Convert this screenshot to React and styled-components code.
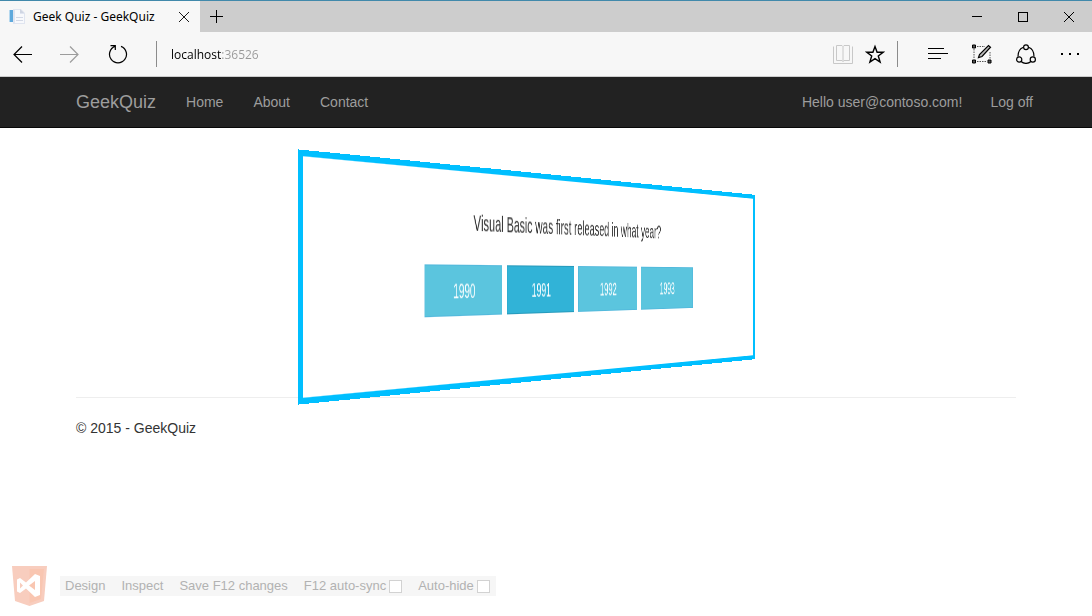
import React from "react";
import styled, { createGlobalStyle } from "styled-components";

const GlobalStyle = createGlobalStyle`
  *, *::before, *::after { box-sizing: border-box; }
  body {
    margin: 0;
    background: #fff;
    color: #333;
    font: 14px/20px "Liberation Sans", Arial, sans-serif;
  }
  button { border: 0; padding: 0; background: none; font: inherit; color: inherit; }
  a { color: inherit; text-decoration: none; }
`;

const TitleBar = styled.div`
  display: flex;
  justify-content: space-between;
  height: 32px;
  background: #cdcdcd;
  border-top: 1px solid #4189ab;
`;

const TabStrip = styled.div`
  display: flex;
`;

const Tab = styled.div`
  display: flex;
  align-items: center;
  width: 200px;
  padding: 0 8px;
  background: #f7f7f7;
  color: #000;
  font-family: "Noto Sans", "Segoe UI", sans-serif;
  font-size: 12px;
`;

const TabTitle = styled.span`
  flex: 1;
  margin-left: 8px;
  white-space: nowrap;
`;

const IconButton = styled.button`
  display: flex;
  align-items: center;
  justify-content: center;
  flex: none;
  width: ${(p) => p.$width || 44}px;
  color: ${(p) => p.$color || "#000"};
`;

const Toolbar = styled.div`
  display: flex;
  align-items: stretch;
  height: 45px;
  background: #f7f7f7;
  border-bottom: 1px solid #ccc;
`;

const HistoryButtons = styled.div`
  display: flex;
  gap: 4px;
`;

const Divider = styled.span`
  align-self: center;
  flex: none;
  width: 1px;
  height: 26px;
  margin: 0 ${(p) => p.$after}px 0 ${(p) => p.$before}px;
  background: #8c8c8c;
`;

const Address = styled.input`
  flex: 1;
  min-width: 0;
  padding: 0;
  border: 0;
  outline: 0;
  font-family: "Open Sans", "Segoe UI", sans-serif;
  font-size: 12px;
  color: transparent;
  background: linear-gradient(90deg, #000 50px, #999 50px);
  background-clip: text;
`;

const NavBar = styled.nav`
  background: #222;
  border-bottom: 1px solid #080808;
  color: #9d9d9d;
`;

const NavInner = styled.div`
  display: flex;
  align-items: center;
  justify-content: space-between;
  max-width: 1000px;
  height: 50px;
  margin: 0 auto;
  padding: 0 13px 0 30px;
`;

const NavGroup = styled.div`
  display: flex;
  align-items: center;
  gap: ${(p) => p.$gap}px;
`;

const Brand = styled.a`
  font-size: 18px;
`;

const Container = styled.main`
  max-width: 970px;
  margin: 0 auto;
  padding: 49px 15px 0;
`;

const QuizCard = styled.section`
  position: relative;
  z-index: 1;
  height: 200px;
  margin: 0 -15px;
  padding-top: 31px;
  border: solid #00bfff;
  border-width: 5px 7px;
  background: #fff;
  text-align: center;
  transform: translateX(30px) perspective(2000px) rotateY(63.3deg);
`;

const Question = styled.p`
  margin: 0 0 24px;
  font-size: 21px;
  line-height: 29px;
`;

const Options = styled.div`
  display: flex;
  justify-content: center;
  gap: 9px;
`;

const Option = styled.button`
  && {
    width: 140px;
    height: 46px;
    padding-top: 2px;
    border: 1px solid ${(p) => (p.$active ? "#269abc" : "#52b9dc")};
    background: ${(p) => (p.$active ? "#31b3d7" : "#5bc5de")};
    color: #fff;
    font-size: 18px;
  }
`;

const Footer = styled.footer`
  margin-top: 20px;
  padding-top: 20px;
  border-top: 1px solid #eee;
`;

const LinkBar = styled.aside`
  position: fixed;
  left: 12px;
  bottom: 10px;
  display: flex;
  align-items: center;
  gap: 13px;
`;

const LinkItems = styled.div`
  display: flex;
  align-items: center;
  gap: 16px;
  height: 20px;
  padding: 0 6px 0 5px;
  background: #f6f6f6;
  color: #b2b2b2;
  font-size: 13px;
`;

const CheckLabel = styled.label`
  display: flex;
  align-items: center;
  gap: 3px;
`;

const Check = styled.input`
  appearance: none;
  width: 13px;
  height: 13px;
  margin: 0;
  border: 1px solid #d2d2d2;
  background: #fff;
`;

const Icon = ({ size = 20, width, height, children, ...rest }) => (
  <svg
    width={width || size}
    height={height || size}
    viewBox={`0 0 ${width || size} ${height || size}`}
    fill="none"
    stroke="currentColor"
    strokeWidth="1.2"
    aria-hidden="true"
    {...rest}
  >
    {children}
  </svg>
);

const PageIcon = () => (
  <Icon size={17} stroke="none">
    <path d="M5 1h8l4 4v11H5z" fill="#e0e5f0" />
    <path d="M7 2h5v4h4v9H7z" fill="#f8f9fc" />
    <path d="M12 1v4h4z" fill="#cfd5e2" />
    <path d="M8 9h7v1H8zM8 12h7v1H8z" fill="#d3d9e6" />
    <path d="M1 2h1v12H1z" fill="#b5d8ef" />
    <path d="M2 2h3v12H2z" fill="#5fa9dc" />
  </Icon>
);

const Logo = () => (
  <Icon width={35} height={40} stroke="none">
    <path d="M0 0h35l-3 35-14.500 5L3 35z" fill="#f8cdbe" />
    <path d="M17.500 3H32l-3 30-11.500 4z" fill="#f9c6b1" />
    <path
      fillRule="evenodd"
      d="M5 13.500l3-1.500 6 4.500 9-8.500 5 2v19l-5 2-9-8.500L8 27l-3-1.500zm3 3v6l3-3zm15-1.500l-6 4.500 6 4.500z"
      fill="#fff"
    />
  </Icon>
);

const years = ["1990", "1991", "1992", "1993"];

export default function App() {
  return (
    <>
      <GlobalStyle />
      <TitleBar>
        <TabStrip>
          <Tab>
            <PageIcon />
            <TabTitle>Geek Quiz - GeekQuiz</TabTitle>
            <IconButton $width={16} aria-label="Close tab">
              <Icon size={12} strokeWidth="0.900"><path d="M1 1l10 10M11 1L1 11" /></Icon>
            </IconButton>
          </Tab>
          <IconButton $width={33} aria-label="New tab">
            <Icon size={13} strokeWidth="1"><path d="M0 6.500h13M6.500 0v13" /></Icon>
          </IconButton>
        </TabStrip>
        <TabStrip>
          <IconButton $width={46} aria-label="Minimize">
            <Icon size={10} strokeWidth="1" shapeRendering="crispEdges"><path d="M0 4.500h10" /></Icon>
          </IconButton>
          <IconButton $width={46} aria-label="Maximize">
            <Icon size={10} strokeWidth="1" shapeRendering="crispEdges"><path d="M.5.5h9v9h-9z" /></Icon>
          </IconButton>
          <IconButton $width={46} aria-label="Close window">
            <Icon size={12} strokeWidth="1"><path d="M1 1l10 10M11 1L1 11" /></Icon>
          </IconButton>
        </TabStrip>
      </TitleBar>

      <Toolbar>
        <HistoryButtons>
          <IconButton aria-label="Back">
            <Icon><path d="M20 10.500H2M10 2.500L2 10.500l8 8" /></Icon>
          </IconButton>
          <IconButton aria-label="Forward" $color="#9c9c9c">
            <Icon><path d="M0 10.500h18M10 2.500l8 8-8 8" /></Icon>
          </IconButton>
          <IconButton aria-label="Refresh">
            <Icon><path d="M13 2.400a8.500 8.500 0 1 1-6 0M2.500 1.700H7.300V6" /></Icon>
          </IconButton>
        </HistoryButtons>
        <Divider $before={16} $after={14} />
        <Address aria-label="Address" defaultValue="localhost:36526" spellCheck={false} />
        <IconButton $width={32} $color="#c8c8c8" aria-label="Reading view">
          <Icon strokeWidth="1">
            <path d="M.5 2.500v17h19v-17" />
            <path d="M3.500 1.500h5.500l1 1 1-1h5.500v15H11l-1 1-1-1H3.500zM10 2.500v15" />
          </Icon>
        </IconButton>
        <IconButton $width={32} aria-label="Add to favorites">
          <Icon><path d="M10 2.500l2.100 5.800h6l-4.800 3.700 1.800 6L10 14.600 4.900 18l1.800-6-4.800-3.700h6z" strokeWidth="1.400" /></Icon>
        </IconButton>
        <Divider $before={6} $after={18} />
        <IconButton aria-label="Hub">
          <Icon strokeWidth="1" shapeRendering="crispEdges"><path d="M0 4.500h16M0 9.500h20M0 14.500h13" /></Icon>
        </IconButton>
        <IconButton aria-label="Make a web note">
          <Icon>
            <path d="M5 2.500h8M5 17.500h10M2 5v10M18 8v7" stroke="#555" strokeWidth="1" strokeDasharray="1.500 1" />
            <path d="M.5 1h3v3h-3zM.5 16h3v3h-3zM16 16h3v3h-3z" fill="#555" strokeWidth="1" />
            <path d="M6.500 13.500l1-3L16.500 1.500l2 1.700L10 12.500z" fill="#bbb" />
          </Icon>
        </IconButton>
        <IconButton aria-label="Share">
          <Icon>
            <path d="M7.500 3.300C4 4.500 2 7.500 2 12.500M12.500 3.300C16 4.500 18 7.500 18 12.500M5 17.500c3 2.300 7 2.300 10 0" />
            <circle cx="10" cy="3.200" r="2.400" />
            <circle cx="3.200" cy="15.500" r="2.600" />
            <circle cx="16.800" cy="15.500" r="2.600" />
          </Icon>
        </IconButton>
        <IconButton aria-label="More actions">
          <Icon stroke="none" fill="currentColor"><path d="M1 9h2v2H1zM9 9h2v2H9zM17 9h2v2h-2z" /></Icon>
        </IconButton>
      </Toolbar>

      <NavBar>
        <NavInner>
          <NavGroup $gap={30}>
            <Brand href="#">GeekQuiz</Brand>
            <a href="#home">Home</a>
            <a href="#about">About</a>
            <a href="#contact">Contact</a>
          </NavGroup>
          <NavGroup $gap={28}>
            <a href="#account">Hello user@contoso.com!</a>
            <a href="#logoff">Log off</a>
          </NavGroup>
        </NavInner>
      </NavBar>

      <Container>
        <QuizCard>
          <Question>Visual Basic was first released in what year?</Question>
          <Options>
            {years.map((year) => (
              <Option key={year} $active={year === "1991"}>{year}</Option>
            ))}
          </Options>
        </QuizCard>
        <Footer>© 2015 - GeekQuiz</Footer>
      </Container>

      <LinkBar>
        <Logo />
        <LinkItems>
          <a href="#design">Design</a>
          <a href="#inspect">Inspect</a>
          <a href="#save">Save F12 changes</a>
          <CheckLabel>F12 auto-sync<Check type="checkbox" /></CheckLabel>
          <CheckLabel>Auto-hide<Check type="checkbox" /></CheckLabel>
        </LinkItems>
      </LinkBar>
    </>
  );
}
